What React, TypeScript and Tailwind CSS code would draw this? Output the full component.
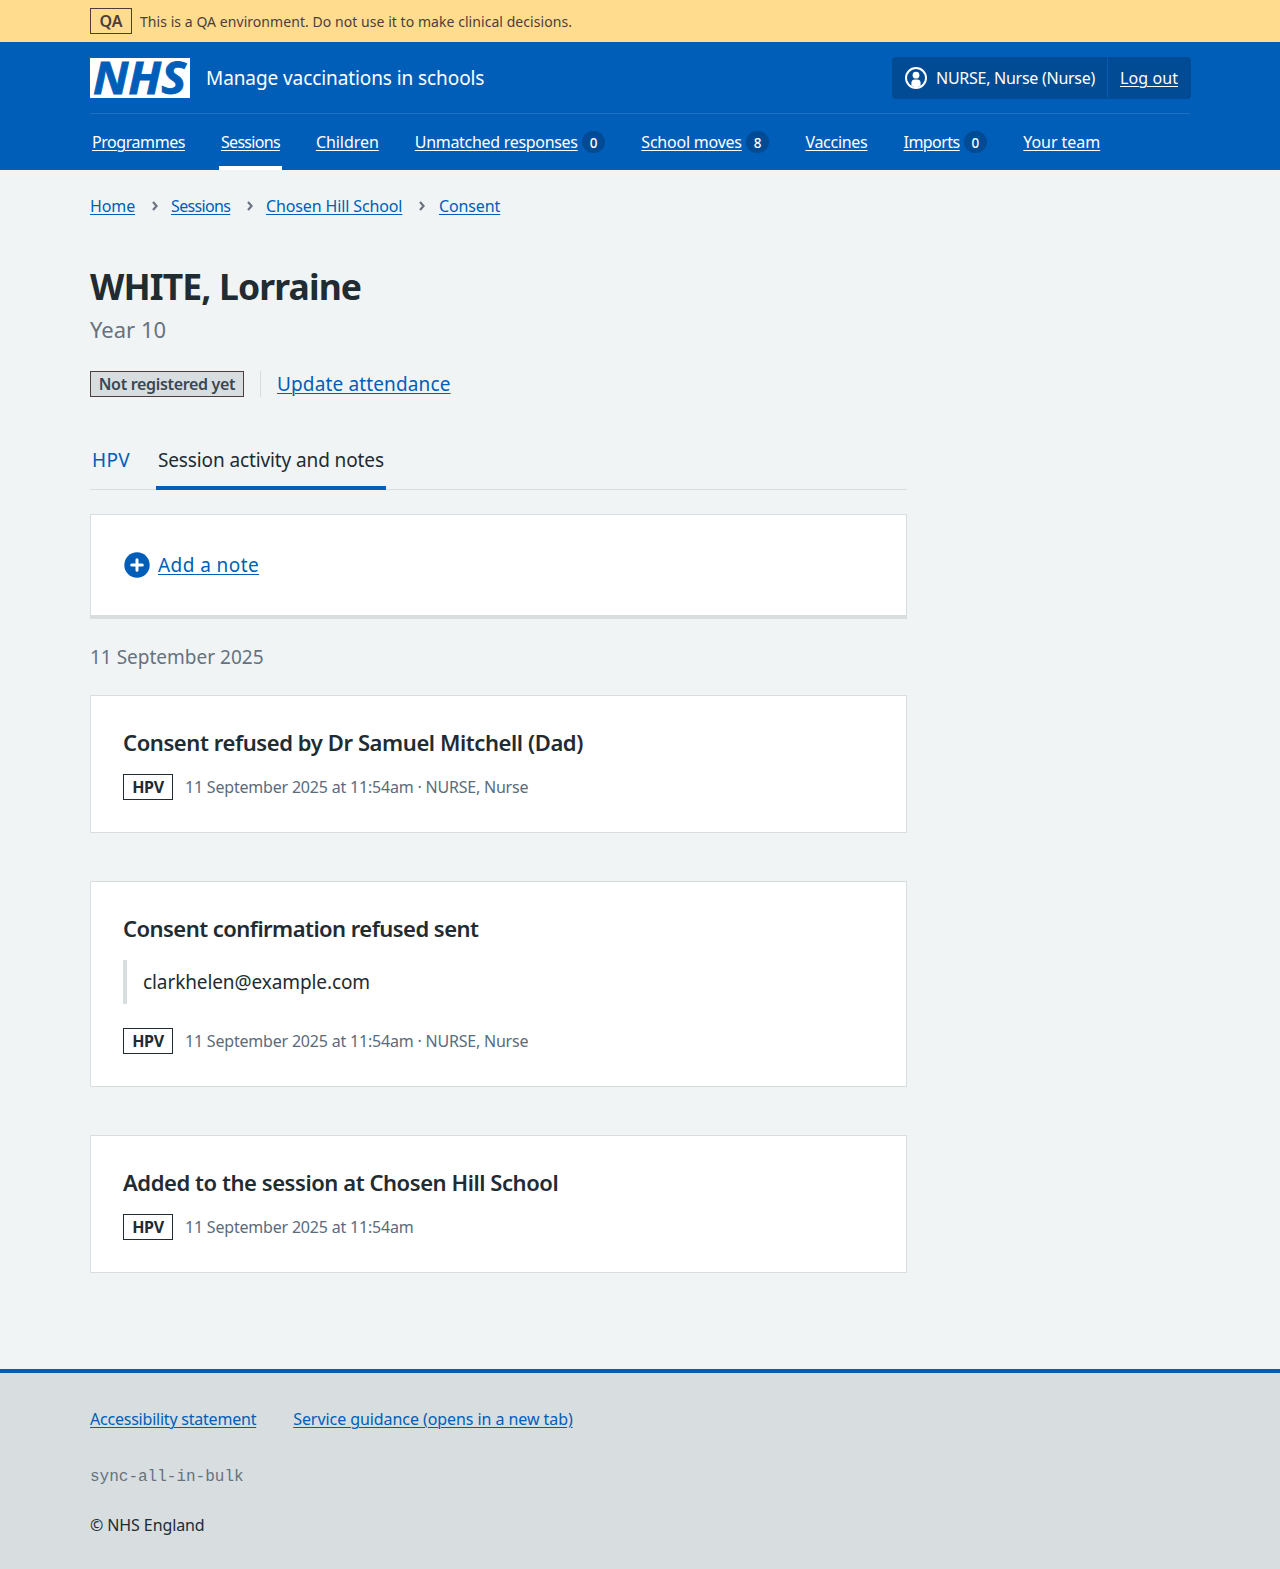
import type { ReactNode } from 'react';

function NhsLogo() {
  return (
    <svg width="100" height="40" viewBox="0 0 100 40" role="img" aria-label="NHS" className="block shrink-0 overflow-visible">
      <rect width="100" height="40" fill="#fff" />
      <text
        x="3"
        y="36"
        textLength="93"
        lengthAdjust="spacingAndGlyphs"
        fontFamily="Open Sans, Noto Sans, sans-serif"
        fontSize="45"
        fontWeight="700"
        fontStyle="italic"
        fill="#005eb8"
        stroke="#005eb8"
        strokeWidth="0.8"
      >
        NHS
      </text>
    </svg>
  );
}

function UserIcon() {
  return (
    <svg width="22" height="22" viewBox="0 0 22 22" className="block shrink-0" aria-hidden="true">
      <circle cx="11" cy="11" r="10" fill="none" stroke="#fff" strokeWidth="2" />
      <circle cx="11" cy="8.2" r="3.4" fill="#fff" />
      <path d="M6.4 18.6V15.4A3.4 3.4 0 0 1 9.8 12.4H12.2A3.4 3.4 0 0 1 15.6 15.4V18.6L11 21Z" fill="#fff" />
    </svg>
  );
}

function PlusIcon() {
  return (
    <svg width="26" height="26" viewBox="0 0 26 26" className="block shrink-0" aria-hidden="true">
      <circle cx="13" cy="13" r="12.7" fill="#005eb8" />
      <path d="M13 7.7V18.3M7.7 13H18.3" stroke="#fff" strokeWidth="3" strokeLinecap="round" />
    </svg>
  );
}

function Chevron() {
  return (
    <svg width="6" height="10" viewBox="0 0 6 10" className="block shrink-0" aria-hidden="true">
      <path d="M1 1L4.6 5L1 9" fill="none" stroke="#6b7280" strokeWidth="2.2" />
    </svg>
  );
}

const navItems = [
  { label: 'Programmes', tracking: 'tracking-[-0.44px]' },
  { label: 'Sessions', tracking: 'tracking-[-0.7px]', active: true },
  { label: 'Children', tracking: 'tracking-[-0.05px]' },
  { label: 'Unmatched responses', tracking: 'tracking-[-0.3px]', count: 0 },
  { label: 'School moves', tracking: 'tracking-[-0.22px]', count: 8 },
  { label: 'Vaccines', tracking: 'tracking-[-0.28px]' },
  { label: 'Imports', tracking: 'tracking-[-0.54px]', count: 0 },
  { label: 'Your team', tracking: 'tracking-[-0.05px]' },
];

const link = 'underline decoration-1 underline-offset-2';

function Header() {
  return (
    <header className="h-32 bg-[#005eb8] text-white">
      <div className="mx-auto w-[1100px]">
        <div className="flex h-[72px] items-center justify-between border-b border-[#1f71c0]">
          <div className="flex items-center gap-4">
            <NhsLogo />
            <span className="text-[19px] leading-7 tracking-[-0.09px]">Manage vaccinations in schools</span>
          </div>
          <div className="-mr-px flex h-[42px] items-center rounded-[4px] bg-[#004b93]">
            <div className="flex items-center gap-[9px] pr-3 pl-[13px]">
              <UserIcon />
              <span className="leading-6 tracking-[-0.27px]">NURSE, Nurse (Nurse)</span>
            </div>
            <div className="flex h-10 items-center border-l border-[#005eb8] pr-[13px] pl-3">
              <a className={`${link} leading-6 tracking-[0.08px]`}>Log out</a>
            </div>
          </div>
        </div>
        <nav className="flex h-14 gap-8">
          {navItems.map((n) => (
            <div
              key={n.label}
              className={`flex items-center gap-1 border-b-4 px-[2px] pt-1 ${n.active ? 'border-white' : 'border-transparent'}`}
            >
              <a className={`${link} leading-6 whitespace-nowrap ${n.tracking}`}>{n.label}</a>
              {n.count !== undefined && (
                <span className="flex h-[22px] w-[23.6px] items-center justify-center rounded-full bg-[#004b93] pt-px text-[13.5px] leading-5 font-medium">
                  {n.count}
                </span>
              )}
            </div>
          ))}
        </nav>
      </div>
    </header>
  );
}

function HpvTag() {
  return (
    <strong className="flex h-[26px] w-[50px] items-center justify-center border border-[#212b32] bg-white leading-6 font-bold tracking-[-0.3px]">
      HPV
    </strong>
  );
}

function EventCard({ title, tracking, meta, note }: { title: string; tracking: string; meta: string; note?: ReactNode }) {
  return (
    <section className="border border-[#d8dde0] bg-white p-8">
      <h3 className={`text-[22px] leading-7 font-semibold ${tracking}`}>{title}</h3>
      {note && (
        <blockquote className="mt-[18px] mb-6 h-11 border-l-4 border-[#d8dde0] pt-2 pl-4 text-[19px] leading-7 tracking-[-0.1px]">
          {note}
        </blockquote>
      )}
      <div className={`flex items-center gap-3 ${note ? '' : 'mt-[18px]'}`}>
        <HpvTag />
        <span className="leading-6 tracking-[-0.2px] text-[#5a6b7c]">{meta}</span>
      </div>
    </section>
  );
}

export default function App() {
  return (
    <div className="min-h-[1569px] bg-[#f0f4f5] font-['Noto_Sans',sans-serif] text-base text-[#212b32]">
      <div className="h-[42px] bg-[#ffdc8e] text-[#4d3d3d]">
        <div className="mx-auto flex h-full w-[1100px] items-center gap-2">
          <strong className="flex h-[26px] w-[42px] items-center justify-center border border-[#4d3d3d] leading-6 font-semibold">QA</strong>
          <span className="pt-0.5 text-sm leading-5 tracking-[0.055px]">
            This is a QA environment. Do not use it to make clinical decisions.
          </span>
        </div>
      </div>
      <Header />

      <div className="mx-auto w-[1100px]">
        <nav className="flex items-center pt-6 leading-6 text-[#005eb8]">
          <a className={`${link} w-[45px] tracking-[-0.12px]`}>Home</a>
          <span className="flex w-9 pl-[17px]"><Chevron /></span>
          <a className={`${link} w-[59px] tracking-[-0.65px]`}>Sessions</a>
          <span className="flex w-9 pl-[17px]"><Chevron /></span>
          <a className={`${link} w-[137px] tracking-[-0.13px]`}>Chosen Hill School</a>
          <span className="flex w-9 pl-4"><Chevron /></span>
          <a className={`${link} tracking-[-0.12px]`}>Consent</a>
        </nav>

        <main className="w-[817px]">
          <h1 className="mt-[46px] text-[35.5px] leading-[44px] font-bold tracking-[-0.87px]">WHITE, Lorraine</h1>
          <p className="mt-[5px] text-[22px] leading-8 text-[#66727f]">Year 10</p>

          <div className="mt-[26px] flex h-[26px] items-center">
            <strong className="flex h-[26px] w-[154px] items-center justify-center border border-[#4d3d3d] bg-[#d8dde0] leading-6 font-semibold tracking-[-0.32px] text-[#384853]">
              Not registered yet
            </strong>
            <div className="ml-4 flex h-[26px] items-center border-l border-[#d8dde0] pl-4 text-[19px]">
              <a className={`${link} leading-6 tracking-[0.14px] text-[#005eb8]`}>Update attendance</a>
            </div>
          </div>

          <div className="mt-[45px] flex h-12 gap-6 text-[19px] leading-7 shadow-[inset_0_-1px_0_#d8dde0]">
            <span className="border-b-4 border-transparent px-[2px] pt-1 tracking-[0.3px] text-[#005eb8]">HPV</span>
            <span className="border-b-4 border-[#005eb8] px-[2px] pt-1 tracking-[-0.11px]">Session activity and notes</span>
          </div>

          <section className="mt-6 flex h-[105px] items-center gap-2 border border-b-4 border-[#d8dde0] bg-white pr-8 pl-[33px] text-[19px]">
            <PlusIcon />
            <a className={`${link} leading-7 tracking-[0.42px] text-[#005eb8]`}>Add a note</a>
          </section>

          <h2 className="mt-6 text-[19px] leading-7 text-[#66727f]">11 September 2025</h2>

          <div className="mt-6 flex flex-col gap-12">
            <EventCard
              title="Consent refused by Dr Samuel Mitchell (Dad)"
              tracking="tracking-[-0.41px]"
              meta="11 September 2025 at 11:54am · NURSE, Nurse"
            />
            <EventCard
              title="Consent confirmation refused sent"
              tracking="tracking-[-0.54px]"
              note="clarkhelen@example.com"
              meta="11 September 2025 at 11:54am · NURSE, Nurse"
            />
            <EventCard
              title="Added to the session at Chosen Hill School"
              tracking="tracking-[-0.44px]"
              meta="11 September 2025 at 11:54am"
            />
          </div>
        </main>
      </div>

      <footer className="mt-24 h-[200px] border-t-4 border-[#005eb8] bg-[#d8dde0]">
        <div className="mx-auto w-[1100px] pt-[34px] leading-6">
          <div className="flex gap-[37px] text-[#005eb8]">
            <a className={`${link} tracking-[-0.22px]`}>Accessibility statement</a>
            <a className={`${link} tracking-[-0.07px]`}>Service guidance (opens in a new tab)</a>
          </div>
          <p className="mt-[34px] font-['Liberation_Mono',monospace] text-[#66727f]">sync-all-in-bulk</p>
          <p className="mt-6 tracking-[-0.1px]">© NHS England</p>
        </div>
      </footer>
    </div>
  );
}
